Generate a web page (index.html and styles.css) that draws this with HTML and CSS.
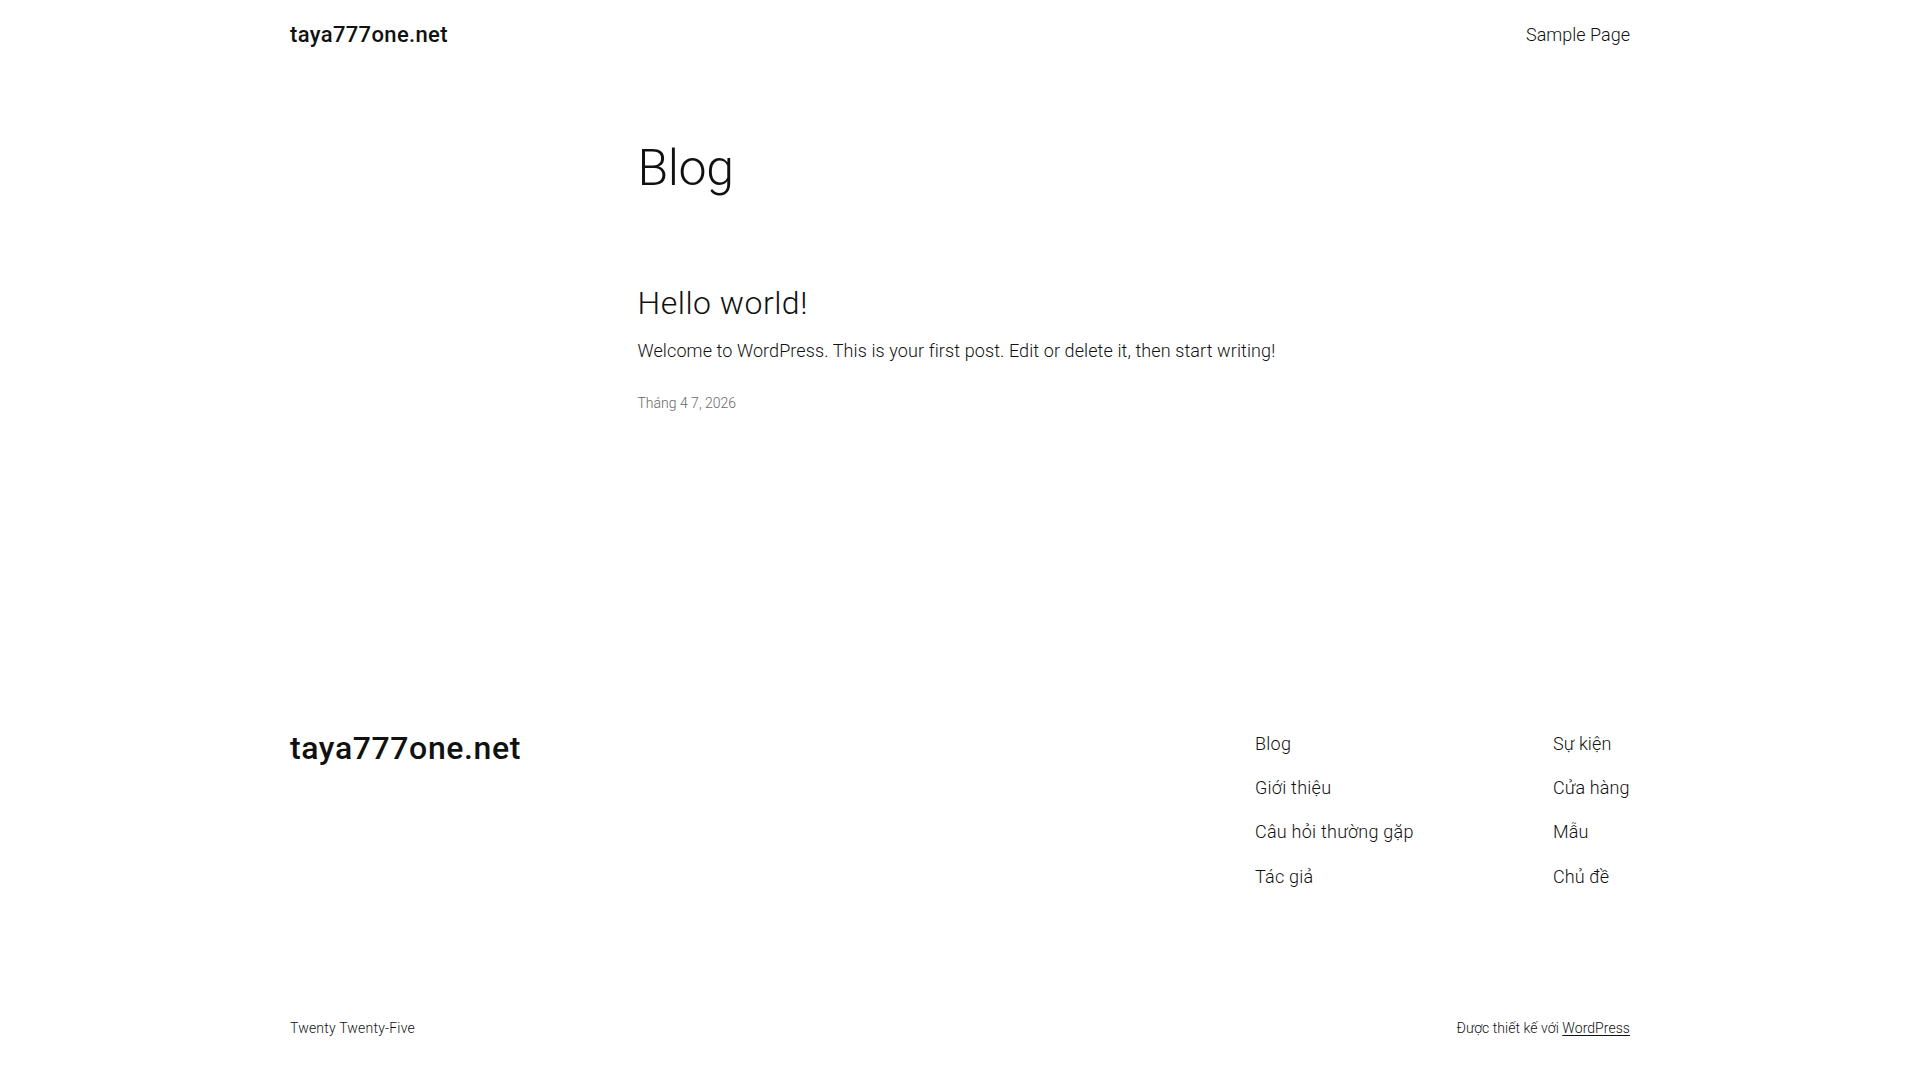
FILE: index.html
```html
<!DOCTYPE html>
<html lang="vi">
<head>
<meta charset="utf-8">
<title>Blog – taya777one.net</title>
<link rel="stylesheet" href="styles.css">
</head>
<body>
<div class="site">
  <header class="site-header">
    <a class="site-title" href="#">taya777one.net</a>
    <nav class="header-nav"><a href="#">Sample Page</a></nav>
  </header>

  <main class="site-main">
    <h1 class="page-title">Blog</h1>
    <article class="post">
      <h2 class="post-title"><a href="#">Hello world!</a></h2>
      <p class="post-excerpt">Welcome to WordPress. This is your first post. Edit or delete it, then start writing!</p>
      <div class="post-date">Tháng 4 7, 2026</div>
    </article>
  </main>

  <footer class="site-footer">
    <div class="footer-top">
      <a class="footer-title" href="#">taya777one.net</a>
      <div class="footer-navs">
        <ul class="footer-nav">
          <li><a href="#">Blog</a></li>
          <li><a href="#">Giới thiệu</a></li>
          <li><a href="#">Câu hỏi thường gặp</a></li>
          <li><a href="#">Tác giả</a></li>
        </ul>
        <ul class="footer-nav footer-nav-alt">
          <li><a href="#">Sự kiện</a></li>
          <li><a href="#">Cửa hàng</a></li>
          <li><a href="#">Mẫu</a></li>
          <li><a href="#">Chủ đề</a></li>
        </ul>
      </div>
    </div>
    <div class="footer-bottom">
      <span class="theme-credit">Twenty Twenty-Five</span>
      <span class="wp-credit">Được thiết kế với <a class="wp-link" href="#">WordPress</a></span>
    </div>
  </footer>
</div>
</body>
</html>
```

FILE: styles.css
```css
html, body {
  margin: 0;
  padding: 0;
  background: #ffffff;
}

body {
  font-family: Roboto, Inter, "Noto Sans", sans-serif;
  font-weight: 300;
  font-size: 18px;
  line-height: 1.4;
  letter-spacing: 0.1px;
  color: #111111;
}

a {
  color: inherit;
  text-decoration: none;
}

.site {
  width: 1340px;
  margin: 0 auto;
}

/* Header */
.site-header {
  display: flex;
  justify-content: space-between;
  align-items: center;
  padding: 19px 0;
  height: 31px;
}

.site-title {
  font-size: 22px;
  font-weight: 500;
  line-height: 31px;
  letter-spacing: 0.35px;
}

.header-nav a {
  font-size: 18px;
  line-height: 25px;
  letter-spacing: 0;
}

/* Main */
.site-main {
  width: 645px;
  margin: 0 auto;
  padding-top: 72px;
}

.page-title {
  margin: 0;
  font-size: 50px;
  font-weight: 300;
  line-height: 54px;
  letter-spacing: -0.4px;
}

.post {
  padding-top: 90px;
}

.post-title {
  margin: 0;
  font-size: 32px;
  font-weight: 300;
  line-height: 36px;
  letter-spacing: 0.5px;
}

.post-excerpt {
  margin: 17px 0 0;
  font-size: 18px;
  line-height: 25px;
}

.post-date {
  margin-top: 30px;
  font-size: 14px;
  line-height: 20px;
  letter-spacing: 0;
  color: #686868;
}

/* Footer */
.site-footer {
  margin-top: 317px;
}

.footer-top {
  display: flex;
  justify-content: space-between;
  align-items: flex-start;
}

.footer-title {
  font-size: 32px;
  font-weight: 500;
  line-height: 36px;
  letter-spacing: 0.6px;
}

.footer-navs {
  display: grid;
  grid-template-columns: 298px 77px;
  padding-top: 1px;
}

.footer-nav {
  list-style: none;
  margin: 0;
  padding: 0;
  display: flex;
  flex-direction: column;
  gap: 19px;
  white-space: nowrap;
}

.footer-nav a {
  font-size: 18px;
  line-height: 25px;
  letter-spacing: 0.25px;
}

.footer-nav-alt a {
  letter-spacing: 0.1px;
}

.footer-bottom {
  display: flex;
  justify-content: space-between;
  align-items: center;
  margin-top: 129px;
  padding-bottom: 41px;
  font-size: 14px;
  line-height: 20px;
}

.theme-credit {
  letter-spacing: 0.2px;
}

.wp-credit {
  letter-spacing: 0.05px;
}

.wp-link {
  text-decoration: underline;
  text-underline-offset: 2px;
}
```
